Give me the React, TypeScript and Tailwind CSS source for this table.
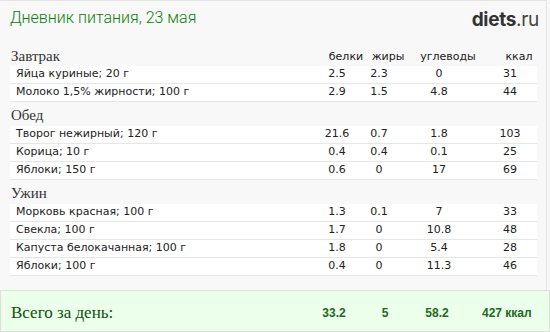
import React from "react";

type Row = { name: string; p: string; f: string; c: string; k: string };
type Meal = { title: string; rows: Row[] };

const meals: Meal[] = [
  {
    title: "Завтрак",
    rows: [
      { name: "Яйца куриные; 20 г", p: "2.5", f: "2.3", c: "0", k: "31" },
      { name: "Молоко 1,5% жирности; 100 г", p: "2.9", f: "1.5", c: "4.8", k: "44" },
    ],
  },
  {
    title: "Обед",
    rows: [
      { name: "Творог нежирный; 120 г", p: "21.6", f: "0.7", c: "1.8", k: "103" },
      { name: "Корица; 10 г", p: "0.4", f: "0.4", c: "0.1", k: "25" },
      { name: "Яблоки; 150 г", p: "0.6", f: "0", c: "17", k: "69" },
    ],
  },
  {
    title: "Ужин",
    rows: [
      { name: "Морковь красная; 100 г", p: "1.3", f: "0.1", c: "7", k: "33" },
      { name: "Свекла; 100 г", p: "1.7", f: "0", c: "10.8", k: "48" },
      { name: "Капуста белокачанная; 100 г", p: "1.8", f: "0", c: "5.4", k: "28" },
      { name: "Яблоки; 100 г", p: "0.4", f: "0", c: "11.3", k: "46" },
    ],
  },
];

const sans = "font-['DejaVu_Sans',Verdana,sans-serif]";
const serif = "font-['Liberation_Serif',serif]";

function Cols({ p, f, c, k, className }: { p: string; f: string; c: string; k: string; className?: string }) {
  return (
    <div className={`flex text-center ${className ?? ""}`}>
      <div className="w-[42px]">{p}</div>
      <div className="w-[42px]">{f}</div>
      <div className="w-[78px]">{c}</div>
      <div className="w-[59px] pl-[5px]">{k}</div>
    </div>
  );
}

export default function App() {
  return (
    <div className="w-[550px] h-[332px] bg-[#f8f8f8] flex flex-col overflow-hidden">
      <div className="flex-1 mr-[3px] border-t border-r border-[#e3e3e3] pl-[10px]">
        {/* header */}
        <div className="flex items-start justify-between h-[43px] pt-[6px] pr-[7px]">
          <h1 className="font-['Roboto',sans-serif] font-light text-[16px] leading-[22px] text-[#0a800a]">
            Дневник питания, 23 мая
          </h1>
          <div className="font-['Inter',sans-serif] text-[19px] leading-[24px] text-[#333] pt-[1px] tracking-[-0.3px]">
            <span className="font-bold">diets</span>
            <span className="text-[#444]">.ru</span>
          </div>
        </div>

        {meals.map((m, i) => (
          <div key={m.title}>
            <div className={`flex items-end ${i === 0 ? "h-[22px] pb-[1px]" : "h-[24px] pb-[2px]"}`}>
              <div className={`${serif} flex-1 text-[15px] leading-[18px] text-[#333] pl-[1px]`}>{m.title}</div>
              {i === 0 && (
                <Cols
                  p="белки"
                  f="жиры"
                  c="углеводы"
                  k="ккал"
                  className={`${sans} text-[11px] leading-[16px] text-[#222]`}
                />
              )}
            </div>
            {m.rows.map((r) => (
              <div
                key={r.name}
                className={`${sans} flex items-center h-[18px] bg-white border-b border-[#e6e6e6] text-[11px] text-[#222] w-[527px]`}
              >
                <div className="flex-1 pl-[6px] truncate">{r.name}</div>
                <Cols p={r.p} f={r.f} c={r.c} k={r.k} />
              </div>
            ))}
          </div>
        ))}
      </div>

      {/* totals */}
      <div className="h-[42px] shrink-0 bg-[#ebffeb] border border-[#dedede] flex items-center pt-[3px] pl-[10px]">
        <div className={`${serif} flex-1 text-[17px] text-[#0b4f0b]`}>Всего за день:</div>
        <div className="flex text-center font-['Liberation_Sans',Arial,sans-serif] font-bold text-[12px] text-[#1d6a1d]">
          <div className="w-[44px]">33.2</div>
          <div className="w-[58px]">5</div>
          <div className="w-[46px]">58.2</div>
          <div className="w-[89px] pl-[22px] text-left">427 ккал</div>
        </div>
      </div>
    </div>
  );
}
